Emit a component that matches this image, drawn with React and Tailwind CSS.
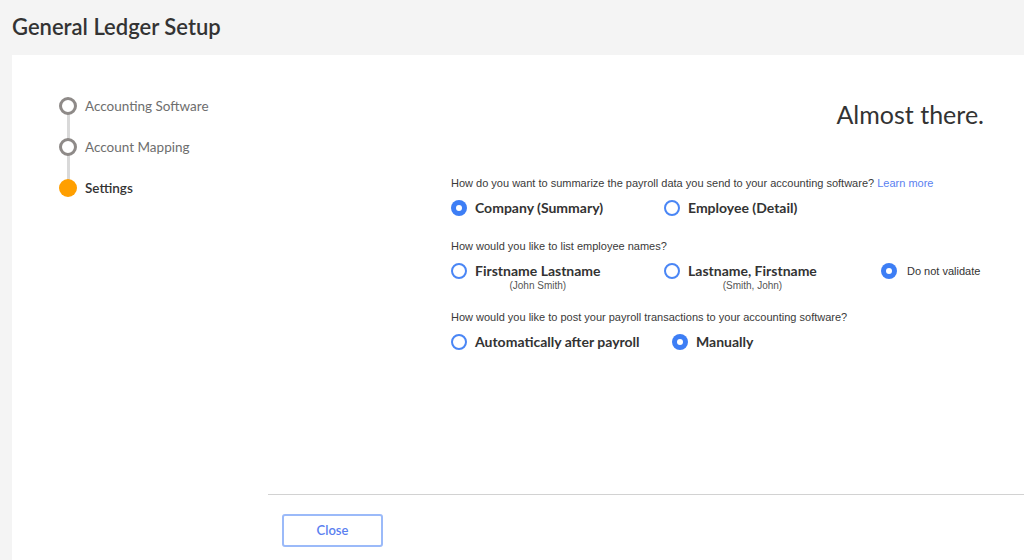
const steps = [
  { label: 'Accounting Software', state: 'done' },
  { label: 'Account Mapping', state: 'done' },
  { label: 'Settings', state: 'current' },
];

function Radio({ checked }) {
  return checked ? (
    <span className="flex h-4 w-4 shrink-0 items-center justify-center rounded-full bg-[#3d7ef5]">
      <span className="h-[6px] w-[6px] rounded-full bg-white" />
    </span>
  ) : (
    <span className="block h-4 w-4 shrink-0 rounded-full border-2 border-[#4a86f5] bg-white" />
  );
}

function Option({ label, sub, checked, plain }) {
  return (
    <div className="flex items-start gap-2">
      <div className="pt-[1px]">
        <Radio checked={checked} />
      </div>
      <div className="flex flex-col items-center">
        <span
          className={
            plain
              ? 'text-[11px] leading-[18px] text-[#333] font-["Liberation_Sans",sans-serif] ml-[2px]'
              : 'text-[14px] leading-[18px] font-bold text-[#333]'
          }
        >
          {label}
        </span>
        {sub && (
          <span className='text-[10px] leading-[12px] text-[#555] font-["Liberation_Sans",sans-serif]'>
            {sub}
          </span>
        )}
      </div>
    </div>
  );
}

function Question({ text, children, link }) {
  return (
    <div>
      <p className='text-[11px] leading-[14px] text-[#3a3a3a] font-["Liberation_Sans",sans-serif]'>
        {text}
        {link && <span className="text-[#5b7ff0]"> {link}</span>}
      </p>
      <div className="mt-[9px] grid grid-cols-[213px_217px_1fr]">{children}</div>
    </div>
  );
}

export default function App() {
  return (
    <div className='flex h-[560px] w-[1024px] flex-col overflow-hidden bg-[#f4f4f4] font-["Lato",sans-serif]'>
      <div className="flex h-[55px] shrink-0 items-center px-3 pb-[3px]">
        <h1 className="text-[22px] font-semibold text-[#333]">General Ledger Setup</h1>
      </div>

      <div className="ml-3 flex flex-1 bg-white">
        <div className="w-[256px] shrink-0 pl-[47px] pt-[42px]">
          {steps.map((s, i) => (
            <div key={s.label} className="relative flex h-[41px] items-start">
              {i < steps.length - 1 && (
                <span className="absolute left-[7.5px] top-[12px] h-[41px] w-[3px] bg-[#d9d9d9]" />
              )}
              {s.state === 'current' ? (
                <span className="relative z-10 h-[18px] w-[18px] shrink-0 rounded-full bg-[#ff9f00]" />
              ) : (
                <span className="relative z-10 h-[18px] w-[18px] shrink-0 rounded-full border-[3.5px] border-[#8e8a88] bg-white" />
              )}
              <span
                className={
                  s.state === 'current'
                    ? 'ml-[8px] text-[13.5px] leading-[18px] font-semibold text-[#333]'
                    : 'ml-[8px] text-[13.5px] leading-[18px] text-[#6e6e6e]'
                }
              >
                {s.label}
              </span>
            </div>
          ))}
        </div>

        <div className="flex flex-1 flex-col">
          <div className="flex-1 pl-[183px] pr-[40px] pt-[44px]">
            <h2 className="text-right text-[25px] leading-[30px] text-[#333]">Almost there.</h2>
            <div className="mt-[47px] flex flex-col">
              <Question
                text="How do you want to summarize the payroll data you send to your accounting software?"
                link="Learn more"
              >
                <Option label="Company (Summary)" checked />
                <Option label="Employee (Detail)" />
              </Question>
              <div className="mt-[22px]">
                <Question text="How would you like to list employee names?">
                  <Option label="Firstname Lastname" sub="(John Smith)" />
                  <Option label="Lastname, Firstname" sub="(Smith, John)" />
                  <Option label="Do not validate" plain checked />
                </Question>
              </div>
              <div className="mt-[18px]">
                <Question text="How would you like to post your payroll transactions to your accounting software?">
                  <Option label="Automatically after payroll" />
                  <div className="ml-[8px]">
                    <Option label="Manually" checked />
                  </div>
                </Question>
              </div>
            </div>
          </div>

          <div className="h-[66px] shrink-0 border-t border-[#d2d2d2] pl-[14px] pt-[19px]">
            <button className="h-[33px] w-[101px] rounded-[3px] border-2 border-[#9bbaf9] bg-white text-[13px] font-semibold text-[#5b7ff0]">
              Close
            </button>
          </div>
        </div>
      </div>
    </div>
  );
}
